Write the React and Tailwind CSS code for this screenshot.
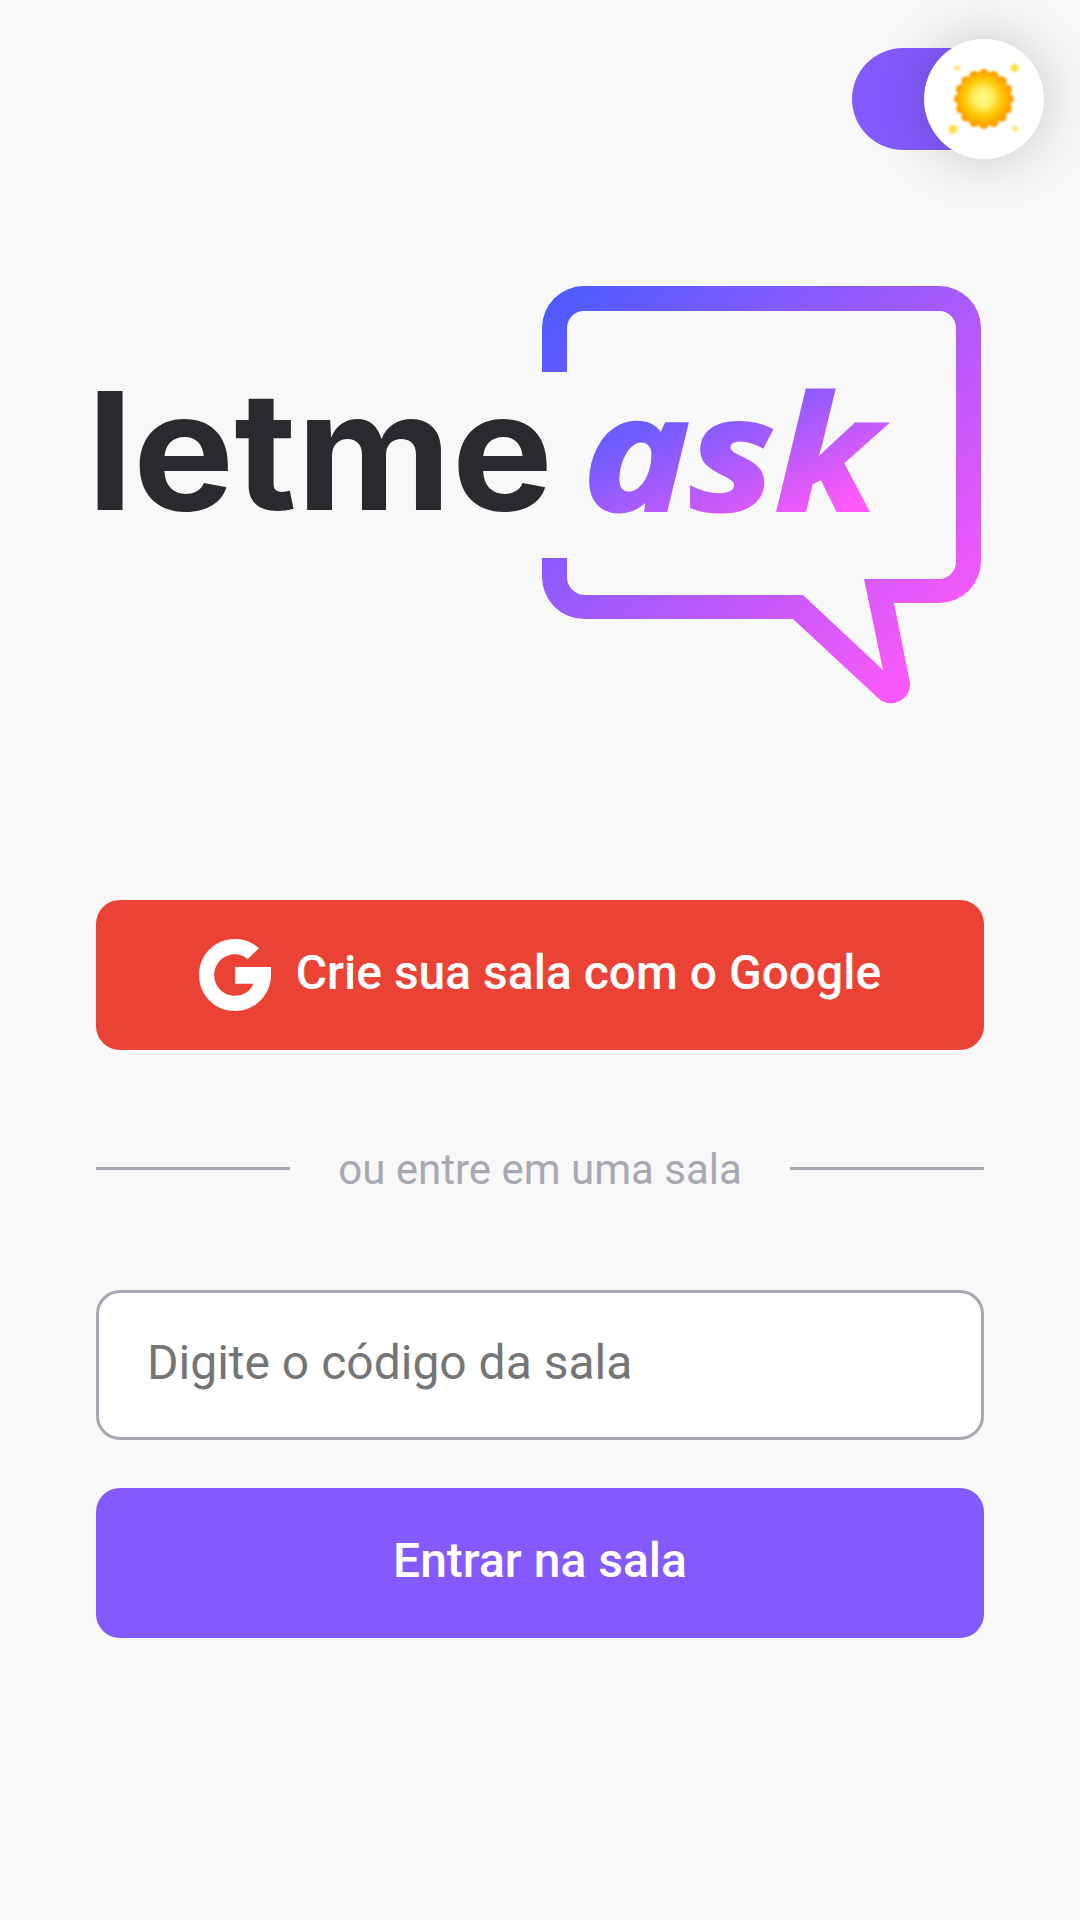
// Sign-in screen: theme toggle, brand logo, Google button and room code form

const sunBumps = Array.from({ length: 16 }, (_, i) => {
  const angle = (i * Math.PI * 2) / 16;
  return { id: i, cx: 984 + Math.cos(angle) * 25, cy: 99 + Math.sin(angle) * 25 };
});

function SunIcon() {
  return (
    <svg viewBox="924 39 120 120" className="w-full h-full">
      <defs>
        <radialGradient id="sunCore" gradientUnits="userSpaceOnUse" cx="983" cy="98" r="30">
          <stop offset="0" stopColor="#ffff8a" />
          <stop offset="0.3" stopColor="#fff06a" />
          <stop offset="0.62" stopColor="#ffc800" />
          <stop offset="0.85" stopColor="#ffa800" />
          <stop offset="1" stopColor="#ff9c00" />
        </radialGradient>
      </defs>
      <g filter="blur(0.8px)">
        {sunBumps.map((b) => (
          <circle key={b.id} cx={b.cx} cy={b.cy} r="5" fill="#ffa000" />
        ))}
        <circle cx="984" cy="99" r="26.5" fill="url(#sunCore)" />
      </g>
      <g filter="blur(1px)" fill="#ffe14d">
        <circle cx="957" cy="68" r="3" opacity="0.75" />
        <circle cx="1014.5" cy="68" r="4.2" />
        <circle cx="953" cy="129.5" r="4.5" />
        <circle cx="1015" cy="129" r="3" opacity="0.75" />
      </g>
    </svg>
  );
}

function ThemeToggle() {
  return (
    <div className="flex justify-end pt-[48px] pr-[48px]">
      <button className="relative w-[180px] h-[102px] rounded-full bg-[#835afd]">
        <span className="absolute right-[-12px] top-[-9px] w-[120px] h-[120px] rounded-full bg-white shadow-[0_0_56px_rgba(0,0,0,0.2)]">
          <SunIcon />
        </span>
      </button>
    </div>
  );
}

function Logo() {
  return (
    <svg viewBox="80 286 904 420" className="block w-[904px] h-[420px] mt-[136px] ml-[80px]">
      <defs>
        <linearGradient id="bubbleFill" gradientUnits="userSpaceOnUse" x1="542" y1="286" x2="925" y2="690">
          <stop offset="0" stopColor="#485bff" />
          <stop offset="1" stopColor="#ff59f8" />
        </linearGradient>
        <linearGradient id="askFill" gradientUnits="userSpaceOnUse" x1="775" y1="364" x2="843" y2="508">
          <stop offset="0" stopColor="#6a5cff" />
          <stop offset="1" stopColor="#ff59f8" />
        </linearGradient>
      </defs>
      <path
        fill="url(#bubbleFill)"
        d="M542 372V328A42 42 0 0 1 584 286H939A42 42 0 0 1 981 328V561A42 42 0 0 1 939 603H894L909 678A19 19 0 0 1 877 697L793 619H584A42 42 0 0 1 542 577V558H567V577A18 18 0 0 0 585 595H803L883 670L864 579H939A17 17 0 0 0 956 562V328A17 17 0 0 0 939 311H584A17 17 0 0 0 567 328V372Z"
      />
      <text
        x="87"
        y="510"
        textLength="466"
        lengthAdjust="spacingAndGlyphs"
        fill="#29292e"
        className="font-['Inter',sans-serif] font-bold text-[164px]"
      >
        letme
      </text>
      {/* the wordmark is heavier than Open Sans bold, so the outline thickens it a little */}
      <text
        x="583"
        y="510"
        textLength="294"
        lengthAdjust="spacingAndGlyphs"
        fill="url(#askFill)"
        stroke="url(#askFill)"
        strokeWidth="3"
        className="font-['Open_Sans',sans-serif] font-bold italic text-[158px]"
      >
        ask
      </text>
    </svg>
  );
}

function GoogleIcon() {
  return (
    <svg viewBox="0 0 72 72" className="w-[72px] h-[72px] shrink-0">
      <path
        fill="#ffffff"
        d="M36 0C45.6 0 53.4 3.4 60 9.2L48.6 20.2C45 17 40.8 15.2 36 15.2C24.5 15.2 15.2 24.5 15.2 36S24.5 56.8 36 56.8C44.6 56.8 51.6 52 54.4 44.8H36V28H72V36C72 56 56 72 36 72S0 56 0 36S16 0 36 0Z"
      />
    </svg>
  );
}

export default function App() {
  return (
    <div className="min-h-[1920px] bg-[#f8f8f8] font-['Roboto',sans-serif] text-[48px]">
      <ThemeToggle />
      <Logo />

      <main className="flex flex-col px-[96px] mt-[194px]">
        <button className="flex items-center justify-center gap-[25px] h-[150px] rounded-[24px] bg-[#ea4335] text-white font-medium">
          <GoogleIcon />
          <span className="mb-[4px]">Crie sua sala com o Google</span>
        </button>

        <div className="flex items-center gap-[48px] mt-[95px] text-[42px] text-[#a8a8b3]">
          <span className="flex-1 h-[3px] mb-[3px] bg-[#a8a8b3]" />
          <span className="leading-[49px]">ou entre em uma sala</span>
          <span className="flex-1 h-[3px] mb-[3px] bg-[#a8a8b3]" />
        </div>

        <input
          type="text"
          placeholder="Digite o código da sala"
          className="mt-[96px] h-[150px] px-[48px] pb-[5px] rounded-[24px] border-[3px] border-[#a8a8b3] bg-white placeholder:text-[#757575] outline-none"
        />
        <button className="mt-[48px] h-[150px] pb-[4px] rounded-[24px] bg-[#835afd] text-white font-medium">
          Entrar na sala
        </button>
      </main>
    </div>
  );
}
